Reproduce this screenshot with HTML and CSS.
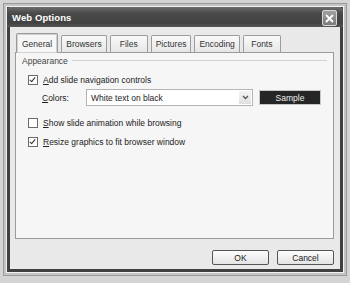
FILE: index.html
```html
<!DOCTYPE html>
<html lang="en">
<head>
    <meta charset="UTF-8">
    <meta name="viewport" content="width=device-width, initial-scale=1.0">
    <title>Web Options</title>
    <link rel="stylesheet" href="styles.css">
</head>
<body>
    <div class="window">
        <div class="titlebar">
            <span class="title">Web Options</span>
            <button class="close" aria-label="Close">
                <svg width="9" height="9" viewBox="0 0 9 9">
                    <path d="M1 1 L8 8 M8 1 L1 8" stroke="#fff" stroke-width="1.8" fill="none"/>
                </svg>
            </button>
        </div>
        <div class="content">
            <div class="tabs">
                <div class="tab selected">General</div>
                <div class="tab">Browsers</div>
                <div class="tab">Files</div>
                <div class="tab">Pictures</div>
                <div class="tab">Encoding</div>
                <div class="tab">Fonts</div>
            </div>
            <div class="panel">
                <div class="group-head">
                    <span>Appearance</span>
                    <span class="rule"></span>
                </div>
                <label class="check-row first">
                    <span class="box checked"></span>
                    <span><u>A</u>dd slide navigation controls</span>
                </label>
                <div class="colors-row">
                    <span class="colors-label"><u>C</u>olors:</span>
                    <div class="select">
                        <span class="select-value">White text on black</span>
                        <span class="select-btn">
                            <svg width="7" height="5" viewBox="0 0 7 5">
                                <path d="M1 1 L3.5 3.5 L6 1" stroke="#555" stroke-width="1.3" fill="none"/>
                            </svg>
                        </span>
                    </div>
                    <div class="sample">Sample</div>
                </div>
                <label class="check-row show">
                    <span class="box"></span>
                    <span><u>S</u>how slide animation while browsing</span>
                </label>
                <label class="check-row resize">
                    <span class="box checked"></span>
                    <span><u>R</u>esize graphics to fit browser window</span>
                </label>
            </div>
            <div class="buttons">
                <button class="btn">OK</button>
                <button class="btn">Cancel</button>
            </div>
        </div>
    </div>
</body>
</html>
```

FILE: styles.css
```css
body {
    margin: 0;
    width: 350px;
    height: 283px;
    background-color: #d4d4d4;
    font-family: "Liberation Sans", Arial, sans-serif;
    font-size: 8.5px;
    color: #222;
    overflow: hidden;
}
.window {
    margin: 7px 0 0 7px;
    width: 330px;
    height: 262px;
    border: 3px solid #404040;
    border-top: none;
    background-color: #e9e9e9;
    display: flex;
    flex-direction: column;
    box-shadow: 0 0 0 1px #f2f2f2, 0 0 0 3px #c4c4c4, 0 0 0 4px #9a9a9a;
}
.titlebar {
    height: 24px;
    margin: 0 -3px;
    padding: 0 6px 0 5px;
    background: linear-gradient(#6e6e6e, #4a4a4a 30%, #424242 80%, #555);
    border-radius: 4px 4px 0 0;
    display: flex;
    align-items: center;
    justify-content: space-between;
}
.title {
    color: #fff;
    font-weight: bold;
    font-size: 9.5px;
    letter-spacing: 0.1px;
    padding-top: 1px;
}
.close {
    width: 15px;
    height: 16px;
    padding: 0;
    border: 1px solid #d8d8d8;
    border-radius: 2px;
    background: linear-gradient(#a0a0a0, #7a7a7a);
    display: flex;
    align-items: center;
    justify-content: center;
    margin-top: 2px;
}
.content {
    flex: 1;
    padding: 6px 6px 4px 5px;
    display: flex;
    flex-direction: column;
}
.tabs {
    height: 19px;
    display: flex;
    align-items: flex-end;
    gap: 3px;
    padding-left: 1px;
    position: relative;
    z-index: 1;
}
.tab {
    height: 16px;
    min-width: 28px;
    padding: 0 4px;
    border: 1px solid #9c9c9c;
    border-bottom: none;
    border-radius: 2px 2px 0 0;
    background: linear-gradient(#fafafa, #e6e6e6);
    display: flex;
    align-items: center;
    justify-content: center;
    color: #333;
}
.tab.selected {
    height: 19px;
    margin-bottom: -1px;
    padding: 0 5px;
    background: #f6f6f6;
    box-shadow: inset 0 0 0 1px #d0d0d0;
}
.panel {
    height: 184px;
    border: 1px solid #9a9a9a;
    background-color: #f6f6f6;
    padding: 1px 6px 0 6px;
    display: flex;
    flex-direction: column;
}
.group-head {
    height: 13px;
    display: flex;
    align-items: center;
    gap: 4px;
    color: #444;
}
.rule {
    flex: 1;
    height: 1px;
    background-color: #d2d2d2;
}
.check-row {
    height: 13px;
    display: flex;
    align-items: center;
    gap: 5px;
    padding-left: 6px;
}
.check-row.first {
    margin-top: 6px;
}
.check-row.show {
    margin-top: 10px;
}
.check-row.resize {
    margin-top: 6px;
}
.box {
    width: 8px;
    height: 8px;
    border: 1px solid #6a6a6a;
    background-color: #fff;
    position: relative;
}
.box.checked::after {
    content: "";
    position: absolute;
    left: 2px;
    top: 0px;
    width: 2px;
    height: 5px;
    border: solid #333;
    border-width: 0 1.5px 1.5px 0;
    transform: rotate(40deg);
}
.colors-row {
    margin-top: 3px;
    height: 17px;
    display: flex;
    align-items: center;
    padding-left: 20px;
}
.colors-label {
    width: 44px;
}
.select {
    width: 165px;
    height: 15px;
    border: 1px solid #b4b4b4;
    background-color: #fff;
    display: flex;
    align-items: center;
    justify-content: space-between;
}
.select-value {
    padding-left: 4px;
}
.select-btn {
    width: 12px;
    height: 13px;
    margin-right: 1px;
    background: linear-gradient(#f4f4f4, #e0e0e0);
    display: flex;
    align-items: center;
    justify-content: center;
}
.sample {
    width: 60px;
    height: 13px;
    margin-left: 6px;
    border: 1px solid #c8c8c8;
    background-color: #262626;
    color: #eee;
    display: flex;
    align-items: center;
    justify-content: center;
}
.buttons {
    margin-top: 11px;
    display: flex;
    justify-content: flex-end;
    gap: 8px;
}
.btn {
    width: 57px;
    height: 15px;
    padding: 0;
    border: 1px solid #555;
    border-radius: 2px;
    background: linear-gradient(#fdfdfd, #e4e4e4);
    font-family: "Liberation Sans", Arial, sans-serif;
    font-size: 8.5px;
    color: #222;
}
u {
    text-decoration-thickness: 1px;
}
```
